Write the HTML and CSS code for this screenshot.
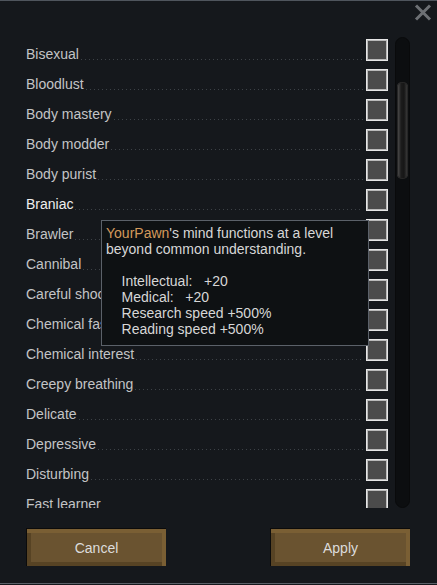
FILE: index.html
```html
<!DOCTYPE html>
<html>
<head>
<meta charset="utf-8">
<link rel="stylesheet" href="styles.css">
</head>
<body>
<div class="window">
  <button class="close" aria-label="Close">
    <svg width="18" height="17" viewBox="0 0 18 17"><path d="M2 1.5 L16 15.5 M16 1.5 L2 15.5" stroke="#6d7074" stroke-width="3" fill="none"/></svg>
  </button>
  <div class="body">
    <div class="list-wrap">
      <div class="list">
        <div class="row"><span class="label">Bisexual</span><span class="dots"></span><span class="check"></span></div>
        <div class="row"><span class="label">Bloodlust</span><span class="dots"></span><span class="check"></span></div>
        <div class="row"><span class="label">Body mastery</span><span class="dots"></span><span class="check"></span></div>
        <div class="row"><span class="label">Body modder</span><span class="dots"></span><span class="check"></span></div>
        <div class="row"><span class="label">Body purist</span><span class="dots"></span><span class="check"></span></div>
        <div class="row hover"><span class="label">Braniac</span><span class="dots"></span><span class="check"></span></div>
        <div class="row"><span class="label">Brawler</span><span class="dots"></span><span class="check"></span></div>
        <div class="row"><span class="label">Cannibal</span><span class="dots"></span><span class="check"></span></div>
        <div class="row"><span class="label">Careful shooter</span><span class="dots"></span><span class="check"></span></div>
        <div class="row"><span class="label">Chemical fascination</span><span class="dots"></span><span class="check"></span></div>
        <div class="row"><span class="label">Chemical interest</span><span class="dots"></span><span class="check"></span></div>
        <div class="row"><span class="label">Creepy breathing</span><span class="dots"></span><span class="check"></span></div>
        <div class="row"><span class="label">Delicate</span><span class="dots"></span><span class="check"></span></div>
        <div class="row"><span class="label">Depressive</span><span class="dots"></span><span class="check"></span></div>
        <div class="row"><span class="label">Disturbing</span><span class="dots"></span><span class="check"></span></div>
        <div class="row"><span class="label">Fast learner</span><span class="dots"></span><span class="check"></span></div>
      </div>
      <div class="scrollbar"><div class="thumb"></div></div>
    </div>
    <div class="buttons">
      <button class="btn">Cancel</button>
      <button class="btn">Apply</button>
    </div>
  </div>
  <div class="tooltip"><span class="pawn">YourPawn</span>'s mind functions at a level
beyond common understanding.

    Intellectual:   +20
    Medical:   +20
    Research speed +500%
    Reading speed +500%</div>
</div>
</body>
</html>
```
FILE: styles.css
```css
html, body {
  margin: 0;
  padding: 0;
  background: #15181c;
}
body {
  width: 437px;
  height: 585px;
  overflow: hidden;
  font-family: "Liberation Sans", Arial, sans-serif;
  font-size: 14px;
}
.window {
  position: relative;
  box-sizing: border-box;
  width: 437px;
  height: 585px;
  border-top: 1px solid #4f555d;
  background: #15181c;
}
.window::after {
  content: "";
  position: absolute;
  left: 0;
  right: 0;
  bottom: 1px;
  height: 1px;
  background: #5a6068;
}
.close {
  position: absolute;
  top: 3px;
  right: 5px;
  padding: 0;
  border: 0;
  background: none;
  width: 18px;
  height: 17px;
}
.close svg { display: block; }
.body {
  padding: 35px 27px 0 26px;
  display: flex;
  flex-direction: column;
}
.list-wrap {
  display: flex;
  height: 472px;
  gap: 7px;
}
.list {
  flex: 1;
  height: 472px;
  overflow: hidden;
  display: flex;
  flex-direction: column;
}
.row {
  flex: 0 0 30px;
  height: 30px;
  display: flex;
  align-items: flex-start;
}
.label {
  padding-top: 10px;
  line-height: 16px;
  color: #c3c4c6;
  white-space: nowrap;
}
.row.hover .label { color: #eeeeee; }
.dots {
  flex: 1;
  height: 24px;
  margin: 0 3px 0 2px;
  background: linear-gradient(to right, #3d4247 1px, transparent 1px) 0 100% / 4px 1px repeat-x;
}
.check {
  box-sizing: border-box;
  flex: 0 0 22px;
  width: 22px;
  height: 22px;
  margin-top: 3px;
  border: 1px solid #e6e6e6;
  box-shadow: inset 0 0 0 1px #b9b9b9;
  background: #4b4b4b;
}
.scrollbar {
  box-sizing: border-box;
  flex: 0 0 15px;
  height: 471px;
  margin-top: 1px;
  border-radius: 8px;
  background: #0c0e10;
  border: 1px solid #090a0b;
  padding-top: 44px;
  display: flex;
  justify-content: center;
}
.thumb {
  width: 11px;
  height: 97px;
  border-radius: 5px;
  background: linear-gradient(to right, #505050 0, #3c3c3c 2px, #1c1c1c 4px, #161616 7px, #2c2c2c 9px, #444 11px);
  box-shadow: inset 0 0 0 1px #262626;
}
.buttons {
  display: flex;
  justify-content: space-between;
  margin-top: 20px;
}
.btn {
  box-sizing: border-box;
  width: 140px;
  height: 38px;
  padding: 0;
  border: 0;
  border-top: 1px solid #0b0b0b;
  border-left: 1px solid #0b0b0b;
  background: #6a5330;
  box-shadow: inset -4px 4px 0 #7a5f34, inset 4px -4px 0 #574324;
  color: #dcdcdc;
  font-family: "Liberation Sans", Arial, sans-serif;
  font-size: 14px;
}
.tooltip {
  position: absolute;
  left: 101px;
  top: 219px;
  box-sizing: border-box;
  width: 268px;
  height: 126px;
  padding: 4px 3px 3px 4px;
  border: 1px solid #5b6169;
  background: #0e1113;
  color: #d7d7d7;
  line-height: 16px;
  white-space: pre;
}
.pawn { color: #d49a5c; }
```
